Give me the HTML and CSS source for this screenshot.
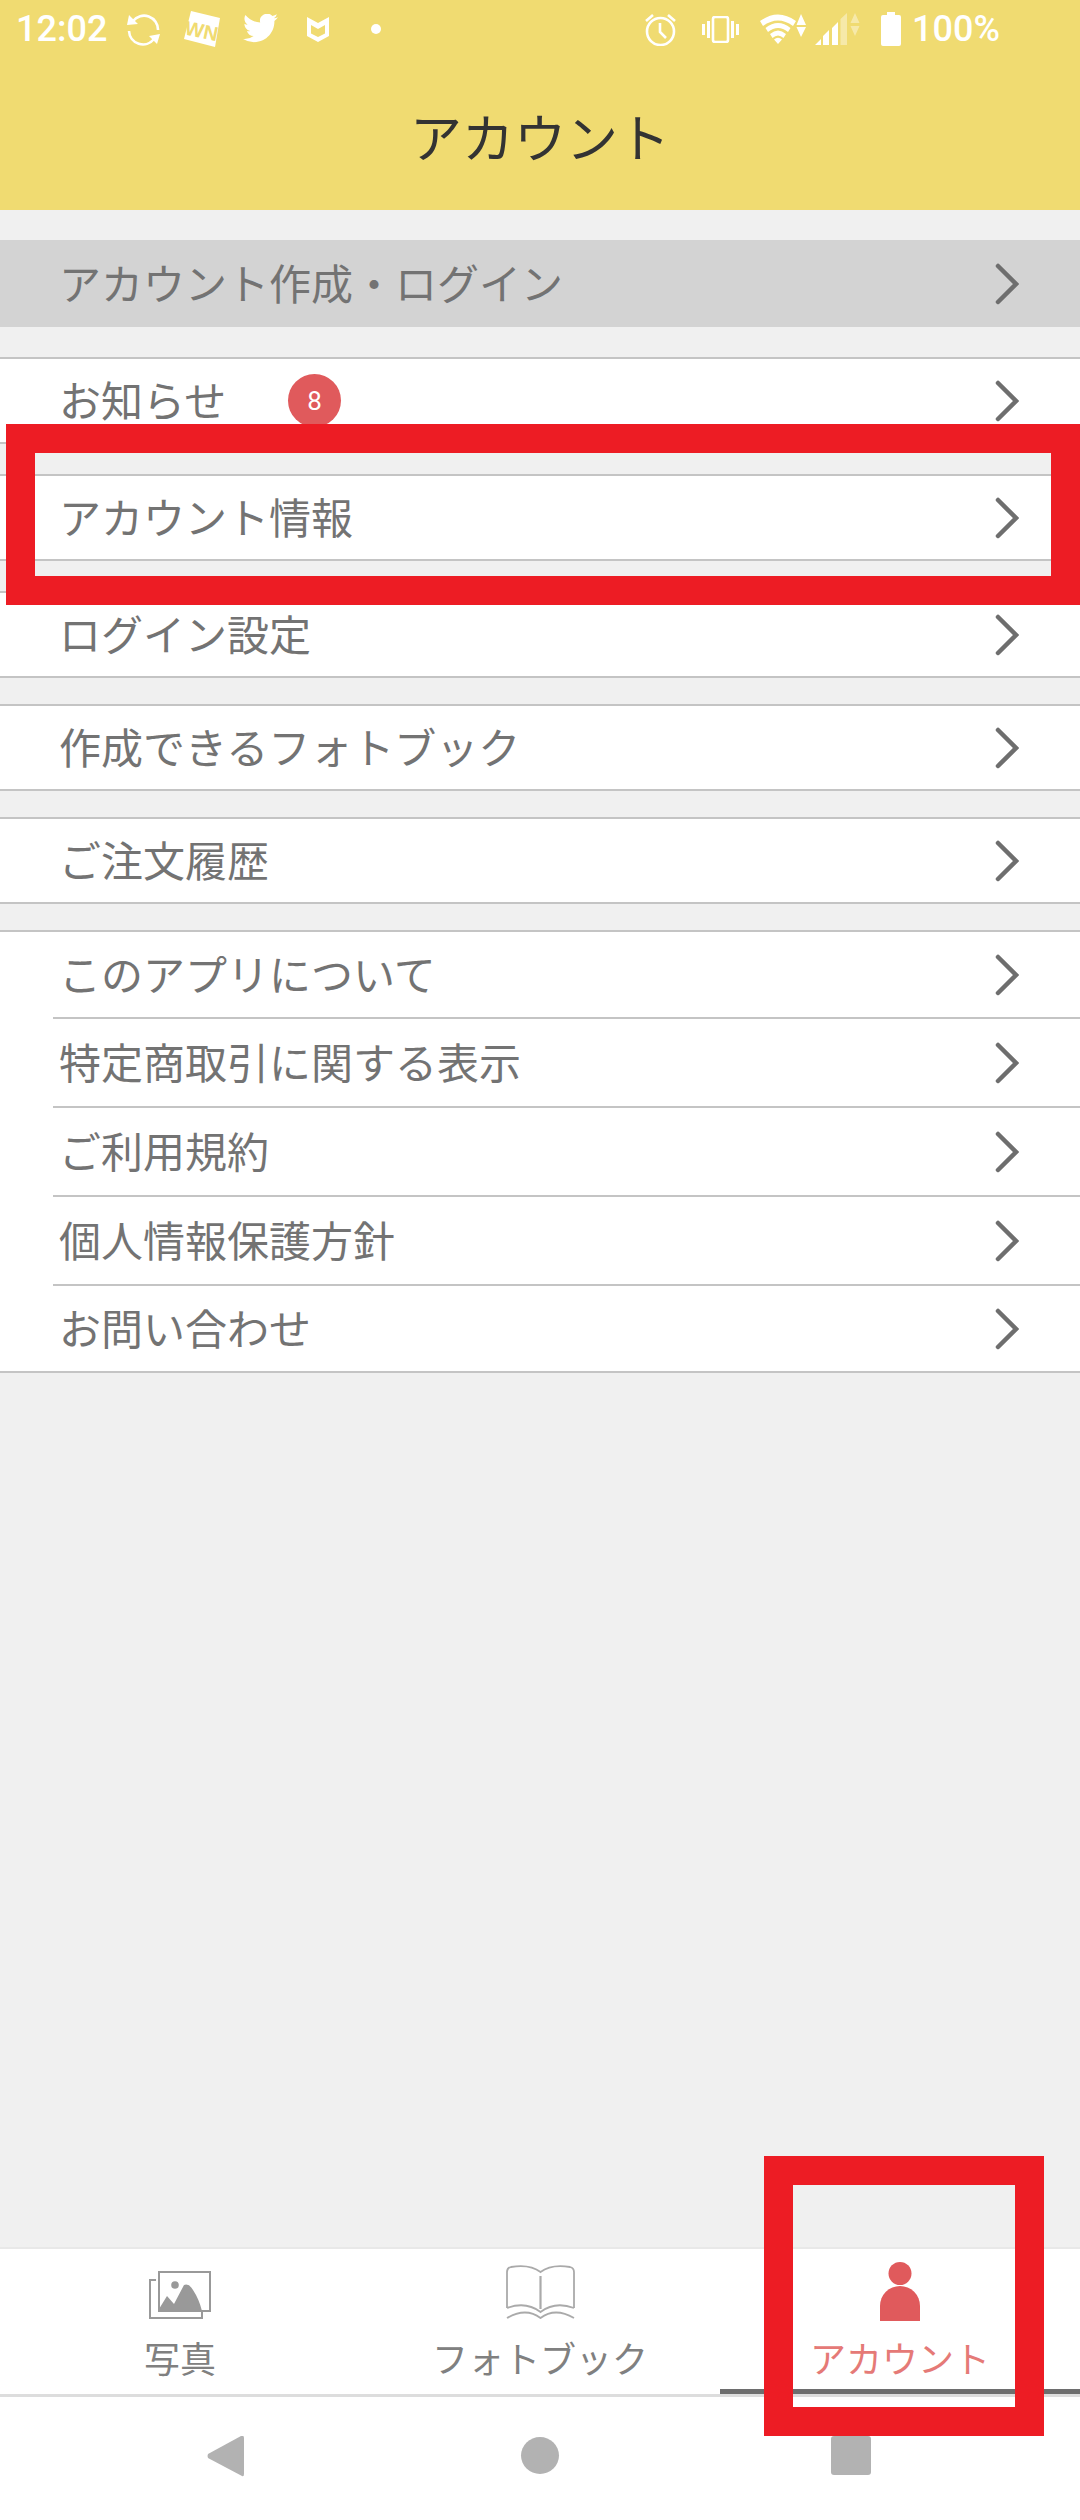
FILE: index.html
```html
<!DOCTYPE html>
<html lang="ja">
<head>
    <meta charset="UTF-8">
    <meta name="viewport" content="width=device-width, initial-scale=1.0">
    <title>アカウント</title>
    <link rel="stylesheet" href="styles.css">
</head>
<body>
    <header class="header">
        <div class="status">
            <span class="status-text time">12:02</span>
            <svg class="ic-sync" width="33" height="33" viewBox="0 0 33 33">
                <path d="M6 8A14 14 0 0 1 31 17M2 18A14 14 0 0 0 27 26" fill="none" stroke="#fff" stroke-width="2.6"/>
                <path d="M0 12L2 2L11 11ZM33 21L22 23L30 31Z" fill="#fff"/>
            </svg>
            <svg class="ic-news" width="36" height="36" viewBox="0 0 36 36">
                <path d="M7 0L36 7L31 36L0 28Z" fill="#fff"/>
                <text class="news-text" x="18" y="27" text-anchor="middle" transform="rotate(12 18 18)">WN</text>
            </svg>
            <svg class="ic-twitter" width="35" height="31" viewBox="0 0 24 21.3">
                <path transform="translate(0 -2.4)" d="M23.953 4.57a10 10 0 01-2.825.775 4.958 4.958 0 002.163-2.723c-.951.555-2.005.959-3.127 1.184a4.92 4.92 0 00-8.384 4.482C7.69 8.095 4.067 6.13 1.64 3.162a4.822 4.822 0 00-.666 2.475c0 1.71.87 3.213 2.188 4.096a4.904 4.904 0 01-2.228-.616v.06a4.923 4.923 0 003.946 4.827 4.996 4.996 0 01-2.212.085 4.936 4.936 0 004.604 3.417 9.867 9.867 0 01-6.102 2.105c-.39 0-.779-.023-1.17-.067a13.995 13.995 0 007.557 2.209c9.053 0 13.998-7.496 13.998-13.985 0-.21 0-.42-.015-.63A9.935 9.935 0 0024 4.59z" fill="#fff"/>
            </svg>
            <svg class="ic-pocket" width="22" height="25" viewBox="0 0 22 25">
                <path fill-rule="evenodd" d="M0 0L11 6L22 0V19L11 25L0 19ZM4 8V16.500L11 20L18 16.500V8L11 12Z" fill="#fff"/>
            </svg>
            <span class="dot"></span>

            <svg class="ic-alarm" width="33" height="33" viewBox="0 0 33 33">
                <circle cx="16.500" cy="18.500" r="13.500" fill="none" stroke="#fff" stroke-width="2.600"/>
                <path d="M16 10V19L22 25M2 8L9 2M31 8L24 2" fill="none" stroke="#fff" stroke-width="2.600"/>
            </svg>
            <svg class="ic-vibrate" width="37" height="27" viewBox="0 0 37 27">
                <rect x="11" y="1" width="15" height="25" rx="2" fill="none" stroke="#fff" stroke-width="2.600"/>
                <path d="M0 8H3V19H0ZM5 5H8V22H5ZM29 5H32V22H29ZM34 8H37V19H34Z" fill="#fff"/>
            </svg>
            <svg class="ic-wifi" width="46" height="30" viewBox="0 0 46 30">
                <path d="M0 7Q18 -6 36 7L33 12Q18 1 3 12ZM5.500 14Q18 4 30.500 14L28 18Q18 10 8 18ZM10 20Q18 13 26 20L23.500 24Q18 19 12.500 24ZM14 25.500Q18 22 22 25.500L18 30Z" fill="#fff"/>
                <path d="M41 0L46 11H36.500ZM36.500 13H46L41 23Z" fill="#fff"/>
            </svg>
            <svg class="ic-signal" width="45" height="32" viewBox="0 0 45 32">
                <path d="M0 32L6 26V32ZM8 32V23L14 17V32ZM17 32V15L23 9V32Z" fill="#fff"/>
                <path class="dim" d="M25.500 32V6L32 0V32ZM40 0L44.500 10H35.500ZM35.500 13H44.500L40 23Z" fill="#fff"/>
            </svg>
            <svg class="ic-battery" width="20" height="34" viewBox="0 0 20 34">
                <path d="M6 0H14V3H18Q20 3 20 5V32Q20 34 18 34H2Q0 34 0 32V5Q0 3 2 3H6Z" fill="#fff"/>
            </svg>
            <span class="status-text battery-text">100%</span>
        </div>
        <h1 class="title">アカウント</h1>
    </header>

    <main class="content">
        <a class="row row-login">
            <span class="row-text">アカウント作成・ログイン</span>
            <svg class="chevron" width="24" height="42" viewBox="0 0 24 42"><path d="M3 3L21 21L3 39"/></svg>
        </a>

        <section class="section">
            <a class="row">
                <span class="row-text">お知らせ</span>
                <span class="badge">8</span>
                <svg class="chevron" width="24" height="42" viewBox="0 0 24 42"><path d="M3 3L21 21L3 39"/></svg>
            </a>
        </section>

        <section class="section">
            <a class="row">
                <span class="row-text">アカウント情報</span>
                <svg class="chevron" width="24" height="42" viewBox="0 0 24 42"><path d="M3 3L21 21L3 39"/></svg>
            </a>
        </section>

        <section class="section">
            <a class="row">
                <span class="row-text">ログイン設定</span>
                <svg class="chevron" width="24" height="42" viewBox="0 0 24 42"><path d="M3 3L21 21L3 39"/></svg>
            </a>
        </section>

        <section class="section section-tight">
            <a class="row">
                <span class="row-text">作成できるフォトブック</span>
                <svg class="chevron" width="24" height="42" viewBox="0 0 24 42"><path d="M3 3L21 21L3 39"/></svg>
            </a>
        </section>

        <section class="section section-tight">
            <a class="row">
                <span class="row-text">ご注文履歴</span>
                <svg class="chevron" width="24" height="42" viewBox="0 0 24 42"><path d="M3 3L21 21L3 39"/></svg>
            </a>
        </section>

        <section class="section section-tight group">
            <a class="row">
                <span class="row-text">このアプリについて</span>
                <svg class="chevron" width="24" height="42" viewBox="0 0 24 42"><path d="M3 3L21 21L3 39"/></svg>
            </a>
            <a class="row">
                <span class="row-text">特定商取引に関する表示</span>
                <svg class="chevron" width="24" height="42" viewBox="0 0 24 42"><path d="M3 3L21 21L3 39"/></svg>
            </a>
            <a class="row">
                <span class="row-text">ご利用規約</span>
                <svg class="chevron" width="24" height="42" viewBox="0 0 24 42"><path d="M3 3L21 21L3 39"/></svg>
            </a>
            <a class="row">
                <span class="row-text">個人情報保護方針</span>
                <svg class="chevron" width="24" height="42" viewBox="0 0 24 42"><path d="M3 3L21 21L3 39"/></svg>
            </a>
            <a class="row">
                <span class="row-text">お問い合わせ</span>
                <svg class="chevron" width="24" height="42" viewBox="0 0 24 42"><path d="M3 3L21 21L3 39"/></svg>
            </a>
        </section>
    </main>

    <nav class="tabbar">
        <a class="tab">
            <span class="tab-icon">
                <svg class="icon-raised" width="62" height="48" viewBox="0 0 62 48">
                    <path d="M7 9H1V47H53V41" fill="none" stroke="#999" stroke-width="2"/>
                    <rect x="10" y="1" width="51" height="39" fill="none" stroke="#999" stroke-width="2"/>
                    <circle cx="26" cy="14" r="3.800" fill="#999"/>
                    <path d="M10 38L18 25L25 33L35 14Q40 12 44 19Q50 28 53 40H10Z" fill="#999"/>
                </svg>
            </span>
            <span class="tab-label">写真</span>
        </a>
        <a class="tab">
            <span class="tab-icon">
                <svg class="icon-raised" width="69" height="54" viewBox="0 0 69 54" fill="none" stroke="#aaa" stroke-width="1.800">
                    <path d="M1 43V7Q1 3 5 2Q24 -1 34.500 7Q45 -1 64 2Q68 3 68 7V43"/>
                    <path d="M34.500 11V44" stroke-width="2.200"/>
                    <path d="M1 43Q20 36 34.500 47Q49 36 68 43"/>
                    <path d="M1 53Q20 42 34.500 53Q49 42 68 53"/>
                </svg>
            </span>
            <span class="tab-label">フォトブック</span>
        </a>
        <a class="tab tab-active">
            <span class="tab-icon">
                <svg width="40" height="59" viewBox="0 0 40 59">
                    <circle cx="20" cy="11.500" r="11.500" fill="#e05a5c"/>
                    <path d="M0 59V44A20 20 0 0 1 40 44V59Z" fill="#e05a5c"/>
                </svg>
            </span>
            <span class="tab-label">アカウント</span>
        </a>
    </nav>

    <div class="navbar">
        <svg class="nav-back" width="37" height="42" viewBox="0 0 37 42">
            <path d="M36 1Q37 1 37 3V39Q37 42 35 41L1 23Q0 21 1 19L34 1Z" fill="#b2b2b2"/>
        </svg>
        <span class="nav-home"></span>
        <span class="nav-recent"></span>
    </div>

    <!-- marcações vermelhas por cima da tela -->
    <div class="mark mark-row"></div>
    <div class="mark mark-tab"></div>
</body>
</html>
```

FILE: styles.css
```css
* {
    box-sizing: content-box;
}
body {
    margin: 0;
    width: 1080px;
    height: 2520px;
    position: relative;
    display: flex;
    flex-direction: column;
    overflow: hidden;
    background-color: #f0f0f0;
    font-family: "Noto Sans CJK JP", "Noto Sans", sans-serif;
}

/* header + status bar */
.header {
    height: 210px;
    background-color: #f0db71;
}
.status {
    height: 58px;
    padding-bottom: 14px;
    padding-left: 16px;
    display: flex;
    align-items: center;
}
.status svg {
    flex-shrink: 0;
}
.status-text {
    font-family: Roboto, sans-serif;
    font-size: 36px;
    font-weight: 500;
    color: #fff;
    line-height: 58px;
}
.time {
    width: 93px;
}
.ic-sync { margin-left: 18px; }
.ic-news { margin-left: 24px; }
.ic-twitter { margin-left: 23px; }
.ic-pocket { margin-left: 29px; }
.dot {
    width: 10px;
    height: 10px;
    margin-left: 42px;
    border-radius: 50%;
    background-color: #fff;
}
.ic-alarm { margin-left: 263px; }
.ic-vibrate { margin-left: 25px; }
.ic-wifi { margin-left: 21px; }
.ic-signal { margin-left: 9px; }
.ic-battery { margin-left: 21px; }
.battery-text { margin-left: 11px; }
.news-text {
    font-family: "Liberation Sans", sans-serif;
    font-size: 20px;
    font-weight: bold;
    fill: #f0db71;
}
.dim {
    opacity: 0.4;
}
.title {
    margin: 0;
    height: 126px;
    padding-bottom: 12px;
    display: flex;
    align-items: center;
    justify-content: center;
    font-size: 52px;
    font-weight: 400;
    color: #333;
}

/* lista */
.content {
    flex: 1;
    padding-top: 30px;
}
.row {
    height: 83px;
    padding: 0 61px 0 59px;
    display: flex;
    align-items: center;
    font-size: 42px;
    color: #737373;
}
.row-text {
    margin-bottom: 5px;
}
.chevron {
    margin-left: auto;
    fill: none;
    stroke: #6e6e6e;
    stroke-width: 4.5;
    stroke-linecap: round;
    stroke-linejoin: miter;
}
.row-login {
    height: 87px;
    background-color: #d3d3d3;
}
.section {
    margin-top: 30px;
    background-color: #fff;
    border-top: 2px solid #c4c4c4;
    border-bottom: 2px solid #c4c4c4;
}
.section-tight {
    margin-top: 26px;
}
.group .row {
    height: 87px;
    margin-left: 53px;
    padding-left: 6px;
    border-bottom: 2px solid #c4c4c4;
}
.group .row:first-child {
    height: 85px;
}
.group .row:last-child {
    height: 85px;
    border-bottom: none;
    margin-left: 0;
    padding-left: 59px;
}
.badge {
    width: 53px;
    height: 53px;
    margin-left: 62px;
    border-radius: 50%;
    background-color: #e05a5c;
    color: #fff;
    font-family: Roboto, sans-serif;
    font-size: 26px;
    display: flex;
    align-items: center;
    justify-content: center;
}

/* abas */
.tabbar {
    display: flex;
    background-color: #fff;
    border-top: 2px solid #e8e8e8;
    border-bottom: 3px solid #ddd;
}
.tab {
    flex: 1;
    height: 133px;
    padding-top: 12px;
    display: flex;
    flex-direction: column;
    align-items: center;
}
.tab-icon {
    height: 60px;
    display: flex;
    align-items: flex-end;
}
.icon-raised {
    margin-bottom: 2px;
}
.tab-label {
    margin-top: 12px;
    font-size: 36px;
    line-height: 48px;
    color: #808080;
}
.tab-active {
    height: 128px;
    border-bottom: 5px solid #6e6e6e;
}
.tab-active .tab-label {
    color: #e57a77;
}

/* barra de navegação */
.navbar {
    height: 117px;
    padding-left: 207px;
    padding-bottom: 6px;
    display: flex;
    align-items: center;
    background-color: #fff;
}
.nav-home {
    width: 38px;
    height: 37px;
    margin-left: 277px;
    border-radius: 50%;
    background-color: #b2b2b2;
}
.nav-recent {
    width: 40px;
    height: 39px;
    margin-left: 272px;
    border-radius: 3px;
    background-color: #b2b2b2;
}

/* retângulos vermelhos */
.mark {
    position: absolute;
    border: 29px solid #ed1c24;
}
.mark-row {
    left: 6px;
    top: 424px;
    width: 1016px;
    height: 123px;
}
.mark-tab {
    left: 764px;
    top: 2156px;
    width: 222px;
    height: 222px;
}
```
